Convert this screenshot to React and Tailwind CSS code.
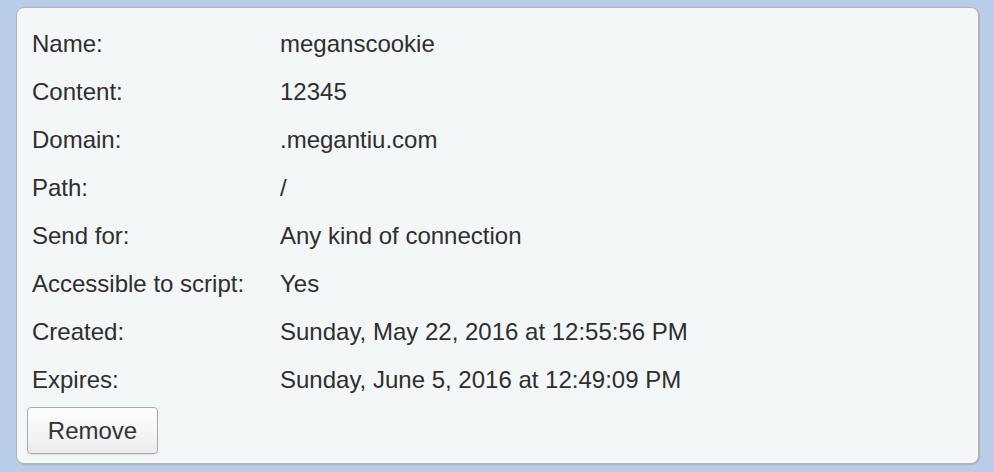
const rows = [
  ['Name:', 'meganscookie'],
  ['Content:', '12345'],
  ['Domain:', '.megantiu.com'],
  ['Path:', '/'],
  ['Send for:', 'Any kind of connection'],
  ['Accessible to script:', 'Yes'],
  ['Created:', 'Sunday, May 22, 2016 at 12:55:56 PM'],
  ['Expires:', 'Sunday, June 5, 2016 at 12:49:09 PM'],
];

export default function App() {
  return (
    <div
      className="w-[994px] h-[472px] bg-[#b9cde9] pt-[7px] pl-[16px] pr-[15px]"
      style={{ fontFamily: '"Liberation Sans", Arial, sans-serif' }}
    >
      <div className="h-[457px] bg-[#f4f7f8] border border-[#b3b3b3] rounded-[8px] shadow-[1px_1px_0_#b3b3b3] pt-[12px] px-[10px]">
        <div className="pl-[5px]">
          {rows.map(([label, value]) => (
            <div key={label} className="flex h-[48px] items-center text-[24px] text-[#2e2e2e]">
              <div className="w-[248px] shrink-0">{label}</div>
              <div>{value}</div>
            </div>
          ))}
        </div>
        <button className="mt-[3px] w-[131px] h-[47px] rounded-[4px] border border-[#aaaaaa] bg-gradient-to-b from-white to-[#ececec] text-[24px] text-[#333] shadow-[0_1px_1px_rgba(0,0,0,0.08)]">
          Remove
        </button>
      </div>
    </div>
  );
}
